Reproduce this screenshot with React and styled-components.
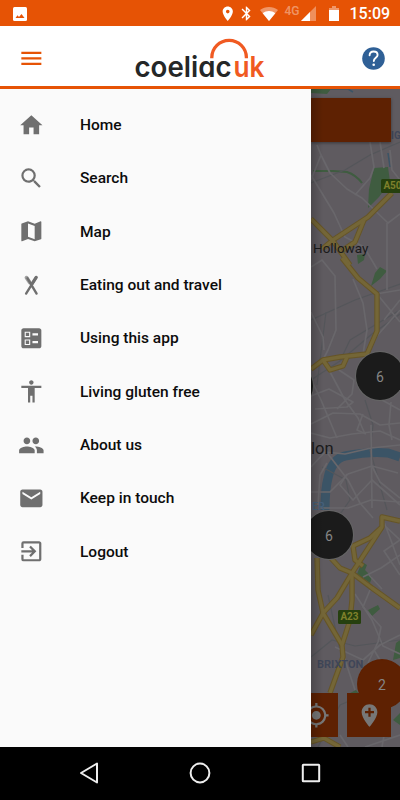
import React from 'react'
import styled, { createGlobalStyle } from 'styled-components'
import {
  MdAccessibility,
  MdAddLocation,
  MdBallot,
  MdBluetooth,
  MdEmail,
  MdExitToApp,
  MdHome,
  MdMap,
  MdMenu,
  MdMyLocation,
  MdPeople,
  MdPlace,
  MdSearch,
} from 'react-icons/md'

const colors = {
  orange: '#e65305',
  logoOrange: '#f05a22',
  dimOrange: '#5e2102',
  blue: '#2f6096',
  drawer: '#fafafa',
  icon: '#6f6f6f',
  map: '#5f5b60',
  road: '#69676b',
  rail: '#54565a',
  yellow: '#746637',
  yellowEdge: '#665527',
  water: '#3b5466',
  green: '#3f5c40',
}

const GlobalStyle = createGlobalStyle`
  * {
    box-sizing: border-box;
  }

  body {
    margin: 0;
    font-family: Roboto, "Liberation Sans", sans-serif;
  }

  svg {
    display: block;
    flex-shrink: 0;
  }
`

const Screen = styled.div`
  display: flex;
  flex-direction: column;
  width: 400px;
  height: 800px;
  overflow: hidden;
`

const StatusBar = styled.div`
  display: flex;
  align-items: center;
  height: 26px;
  padding: 1px 11.5px 0 13px;
  color: #fff;
  background: ${colors.orange};
`

const StatusIcons = styled.div`
  display: flex;
  align-items: center;
  margin-left: auto;
`

const Network = styled.span`
  width: 16px;
  height: 15px;
  margin-left: 7px;
  font-size: 12px;
  line-height: 11px;
  font-weight: 500;
  color: rgba(255, 255, 255, 0.4);
`

const Clock = styled.span`
  width: 39px;
  margin-left: 11px;
  font-size: 16px;
  font-weight: 500;
  line-height: 20px;
  text-align: right;
  white-space: nowrap;
`

const Header = styled.header`
  display: flex;
  align-items: center;
  justify-content: space-between;
  height: 63px;
  padding: 4px 15.5px 0 17.7px;
  color: ${colors.orange};
  background: #fff;
  border-bottom: 3px solid ${colors.orange};
`

const Brand = styled.svg`
  margin-right: 5px;
  font-family: Inter, "Liberation Sans", sans-serif;
  font-size: 28.5px;
  font-feature-settings: 'cv11';
`

const Body = styled.div`
  display: flex;
  height: 658px;
`

const Drawer = styled.nav`
  width: 311px;
  padding-top: 9.5px;
  background: ${colors.drawer};
`

const MenuItem = styled.div`
  display: flex;
  align-items: center;
  height: 53.33px;
  padding-left: 17.7px;
  color: ${colors.icon};
`

const MenuLabel = styled.span`
  margin-left: 35.6px;
  font-size: 15.5px;
  font-weight: 500;
  color: #0c0c0c;
`

const MapArea = styled.div`
  position: relative;
  flex: 1;
  overflow: hidden;
  background: ${colors.map};

  &::after {
    content: '';
    position: absolute;
    inset: 0 auto 0 0;
    width: 12px;
    background: linear-gradient(to right, rgba(0, 0, 0, 0.2), transparent);
  }
`

const MapLabel = styled.span`
  position: absolute;
  left: ${({ x }) => x}px;
  top: ${({ y }) => y}px;
  font-size: ${({ size }) => size}px;
  line-height: 20px;
  font-weight: ${({ weight }) => weight || 400};
  color: ${({ color }) => color || '#1a1a1b'};
  transform: translateY(-50%);
  white-space: nowrap;
`

const RoadBadge = styled.span`
  position: absolute;
  left: ${({ x }) => x}px;
  top: ${({ y }) => y}px;
  width: 23px;
  height: 14px;
  border-radius: 1.5px;
  font-size: 10px;
  line-height: 14.5px;
  font-weight: 700;
  text-align: center;
  color: #7f802c;
  background: #26400f;
`

const Cluster = styled.div`
  position: absolute;
  left: ${({ x }) => x - 24}px;
  top: ${({ y }) => y - 24}px;
  display: flex;
  align-items: center;
  justify-content: center;
  width: 48px;
  height: 48px;
  padding-top: 2px;
  border-radius: 50%;
  font-size: 14px;
  color: #858585;
  background: ${({ background }) => background || '#1b1b1b'};
  box-shadow: 0 0 0 1px ${({ background }) => background || '#666'};
`

const SearchCard = styled.div`
  position: absolute;
  top: 9px;
  left: 0;
  width: 80px;
  height: 44px;
  background: ${colors.dimOrange};
  box-shadow: 0 1px 3px rgba(0, 0, 0, 0.4);
`

const MapActions = styled.div`
  position: absolute;
  right: 9px;
  bottom: 10px;
  display: flex;
  gap: 9px;
`

const MapAction = styled.div`
  display: flex;
  align-items: center;
  justify-content: center;
  width: 44px;
  height: 44px;
  color: #777;
  background: ${colors.dimOrange};
`

const NavBar = styled.footer`
  display: flex;
  height: 53px;
  padding: 0 33.5px 1px;
  background: #000;
`

const NavButton = styled.div`
  display: flex;
  flex: 1;
  align-items: center;
  justify-content: center;
`

const ImageIcon = () => (
  <svg width="14" height="14" viewBox="0 0 14 14">
    <rect width="14" height="14" rx="1.5" fill="#fff" />
    <path d="M2.5 11l2-2.8L6 10l2.5-3 3 4z" fill={colors.orange} />
  </svg>
)

const WifiIcon = () => (
  <svg width="18" height="14" viewBox="0 0 18 14">
    <path d="M0 3C5-1 13-1 18 3L9 14z" fill="#fff" opacity=".4" />
    <path d="M2.7 6.2C6.5 3.4 11.5 3.4 15.3 6.2L9 14z" fill="#fff" />
  </svg>
)

const SignalIcon = () => (
  <svg width="15" height="15" viewBox="0 0 15 15">
    <path d="M15 0v15H0z" fill="#fff" opacity=".35" />
    <path d="M9 6v9H0z" fill="#fff" />
  </svg>
)

const BatteryIcon = () => (
  <svg width="10" height="15" viewBox="0 0 10 15">
    <path d="M3 0h4v2h3v3H0V2h3z" fill="#fff" opacity=".4" />
    <path d="M0 4h10v11H0z" fill="#fff" />
  </svg>
)

const Spacer = styled.span`
  width: ${({ size }) => size}px;
`

const HelpIcon = () => (
  <svg width="23" height="23" viewBox="0 0 23 23">
    <circle cx="11.5" cy="11.5" r="11.3" fill={colors.blue} />
    <path d="M7.6 8.3c.1-2.5 1.8-3.8 4-3.8 2.3 0 4 1.4 4 3.4 0 2.9-3.8 3-3.8 6.2" fill="none" stroke="#fff" strokeWidth="1.9" strokeLinecap="round" />
    <circle cx="11.7" cy="17.7" r="1.3" fill="#fff" />
  </svg>
)

const CutleryIcon = () => (
  <svg width="26.7" height="26.7" viewBox="0 0 27 27" fill="none" stroke="currentColor" strokeLinecap="round">
    <path d="M9.6 6.4L18.8 21.8M18.4 5.5L8.2 21.8" strokeWidth="2.4" />
    <path d="M18.4 5.5L14.2 12" strokeWidth="3.3" />
    <path d="M8.6 5.7l3.3 5" strokeWidth="3.8" opacity=".65" />
  </svg>
)

const Logo = () => (
  <Brand width="134" height="46" viewBox="133 35 134 46">
    <path d="M211.8 58.2v-.6a17.3 17.3 0 0 1 34.6 0v.6" fill="none" stroke={colors.logoOrange} strokeWidth="3.3" />
    <text x="134.5" y="76.5" textLength="97" lengthAdjust="spacingAndGlyphs" fontWeight="600" fill="#252727">coeliac</text>
    <text x="233.5" y="76.5" textLength="31" lengthAdjust="spacingAndGlyphs" fontWeight="600" fill={colors.logoOrange}>uk</text>
  </Brand>
)

const mainRoads = [
  'M392 193L368 217L333 240L322 249',
  'M364 220L355 242L343 250',
  'M311 219L333 241L350 265',
  'M342 258L358 278L377 294L377 331L367 354L340 357L323 360L311 369',
  'M323 360L330 370L343 366L347 357',
  'M400 521L382 517L382 527L370 538L353 546L355 560L363 566',
  'M382 527L352 573L337 598L323 613L311 635',
  'M317 558L318 590L323 613L342 645',
  'M328 555L340 568L352 573L372 588L400 608',
  'M352 573L352 600L350 620L342 645L343 657L330 693',
  'M311 742L324 738L340 747',
]

const roads = [
  'M311 180L321 155L317 145M321 155L330 173L347 189L362 198L388 223L400 214',
  'M311 175L334 213L345 237L364 247L377 269',
  'M370 142L374 167L370 178M380 142L384 168M390 150L392 170L400 180',
  'M355 195L370 178M387 223L387 250L387 290M376 294L400 290',
  'M311 267L322 260L335 276L336 330L328 350L323 360',
  'M311 312L323 337L324 350M353 279L363 303L367 330L363 354',
  'M377 294L400 322M400 310L375 338M384 320L400 300',
  'M311 396L329 389L353 402L347 407L315 409M311 379L321 400L337 438',
  'M329 370L345 400L358 418L365 434M339 370L354 380L352 394L337 409',
  'M311 424L333 413L360 414L380 425L400 423M311 433L330 438L352 434L380 431L400 440',
  'M363 414L357 430L366 434M391 402L389 425L392 440M400 410L382 400',
  'M311 467L325 452L345 454L371 448L400 445M371 425L372 508',
  'M311 492H330L348 474L372 466L398 473M325 450L348 480L360 503L373 518',
  'M320 508L348 508L371 500L400 502M347 474L340 485L353 500L372 480L400 505',
  'M327 463L320 475L318 505M372 466L380 482L400 498',
  'M383 524L400 540L384 551L400 575M382 517L389 535L400 565',
  'M363 577L381 568L400 555M369 575L382 589',
  'M370 590L363 607L381 627L378 642L368 663M400 635L380 645L363 660L335 647',
  'M344 657L355 690M374 650L386 670M355 594L372 620L383 646L400 654',
  'M348 747L340 735M365 747L400 735M392 691L382 747',
]

const rails = [
  'M311 183L345 170L370 155L400 142',
  'M311 320L355 300L400 284M326 312L317 385',
  'M311 380L340 361L372 334L400 314',
  'M340 361L350 340L400 310M365 400L373 425L370 450L387 510',
  'M322 467L346 480L350 500L336 520',
  'M311 657L332 640L355 646L400 640M328 595L340 650',
  'M318 747L340 705L375 690',
]

const StreetMap = () => (
  <svg width="89" height="658" viewBox="311 89 89 658" fill="none" strokeLinejoin="round">
    <g fill={colors.green}>
      <path d="M311 89h20l-4 5-16-1zM374 168l14-1 2 15-11 15-11 11 1-19zM357 255l8-1-1 6-6 4zM380 267l7 4-7 8-9 7 4-13zM362 562l5 3-2 5 7 7-2 6-13-9zM368 610l10-5 2 4-8 7zM350 693l6-3 4 5-7 1zM396 643l4-3v18l-7 2zM393 720l7-7v12z" />
    </g>
    <path d="M313 171l20 0 14 1q9 3 15 11" stroke={colors.green} strokeWidth="2" />
    <path d="M325 510Q325 489 328 478Q332 459 345 456Q370 451 388 453L400 457" stroke={colors.water} strokeWidth="9" />
    <path d="M331 89l17 0 5 3M388 153l2 14" stroke={colors.water} strokeWidth="1.5" />
    {rails.map(d => <path key={d} d={d} stroke={colors.rail} strokeWidth="1.2" />)}
    {roads.map(d => <path key={d} d={d} stroke={colors.road} strokeWidth="1.7" />)}
    {mainRoads.map(d => <path key={d} d={d} stroke={colors.yellowEdge} strokeWidth="5.4" />)}
    {mainRoads.map(d => <path key={d} d={d} stroke={colors.yellow} strokeWidth="3.4" />)}
  </svg>
)

const menu = [
  { label: 'Home', Icon: MdHome },
  { label: 'Search', Icon: MdSearch },
  { label: 'Map', Icon: MdMap },
  { label: 'Eating out and travel', Icon: CutleryIcon },
  { label: 'Using this app', Icon: MdBallot },
  { label: 'Living gluten free', Icon: MdAccessibility },
  { label: 'About us', Icon: MdPeople },
  { label: 'Keep in touch', Icon: MdEmail },
  { label: 'Logout', Icon: MdExitToApp },
]

const App = () => (
  <Screen>
    <GlobalStyle />
    <StatusBar>
      <ImageIcon />
      <StatusIcons>
        <MdPlace size={17.5} />
        <Spacer size={2} />
        <MdBluetooth size={17} />
        <Spacer size={4.5} />
        <WifiIcon />
        <Network>4G</Network>
        <SignalIcon />
        <Spacer size={13} />
        <BatteryIcon />
        <Clock>15:09</Clock>
      </StatusIcons>
    </StatusBar>
    <Header>
      <MdMenu size={26.7} />
      <Logo />
      <HelpIcon />
    </Header>
    <Body>
      <Drawer>
        {menu.map(({ label, Icon }) => (
          <MenuItem key={label}>
            <Icon size={26.7} />
            <MenuLabel>{label}</MenuLabel>
          </MenuItem>
        ))}
      </Drawer>
      <MapArea>
        <StreetMap />
        <MapLabel x={80} y={47} size={10} weight={700} color="#3f4658">IG</MapLabel>
        <MapLabel x={2} y={159} size={13.5}>Holloway</MapLabel>
        <MapLabel x={0} y={360} size={16.5}>lon</MapLabel>
        <MapLabel x={1} y={418} size={10.5} weight={500} color="#46617c">ER</MapLabel>
        <MapLabel x={6} y={576} size={11} weight={700} color="#3f4658">BRIXTON</MapLabel>
        <RoadBadge x={70} y={90}>A50</RoadBadge>
        <RoadBadge x={27} y={521}>A23</RoadBadge>
        <Cluster x={-22} y={297} />
        <Cluster x={69} y={286.5}>6</Cluster>
        <Cluster x={18} y={446}>6</Cluster>
        <SearchCard />
        <Cluster x={71} y={594.5} background={colors.dimOrange}>2</Cluster>
        <MapActions>
          <MapAction><MdMyLocation size={26.7} /></MapAction>
          <MapAction><MdAddLocation size={27} /></MapAction>
        </MapActions>
      </MapArea>
    </Body>
    <NavBar>
      <NavButton>
        <svg width="20" height="22" viewBox="0 0 20 22">
          <path d="M18 1.5v19L2 11z" fill="none" stroke="#eee" strokeWidth="2" strokeLinejoin="round" />
        </svg>
      </NavButton>
      <NavButton>
        <svg width="22" height="22" viewBox="0 0 22 22">
          <circle cx="11" cy="11" r="9.4" fill="none" stroke="#eee" strokeWidth="2" />
        </svg>
      </NavButton>
      <NavButton>
        <svg width="20" height="20" viewBox="0 0 20 20">
          <rect x="1.8" y="1.8" width="16.4" height="16.4" rx=".5" fill="none" stroke="#eee" strokeWidth="2" />
        </svg>
      </NavButton>
    </NavBar>
  </Screen>
)

export default App
